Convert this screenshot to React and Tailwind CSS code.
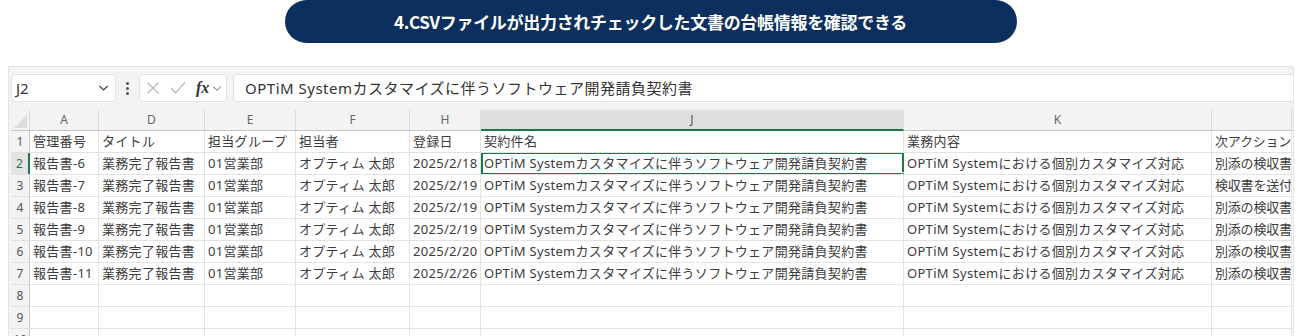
import React from "react";

const COLS = ["w-[19px]", "w-[69px]", "w-[106px]", "w-[91px]", "w-[114px]", "w-[71px]", "w-[423px]", "w-[308px]", "w-[80px]"];
const LETTERS = ["A", "D", "E", "F", "H", "J", "K", ""];

const J = "OPTiM Systemカスタマイズに伴うソフトウェア開発請負契約書";
const K = "OPTiM Systemにおける個別カスタマイズ対応";

const ROWS = [
  ["管理番号", "タイトル", "担当グループ", "担当者", "登録日", "契約件名", "業務内容", "次アクション"],
  ["報告書-6", "業務完了報告書", "01営業部", "オプティム 太郎", "2025/2/18", J, K, "別添の検収書を確認"],
  ["報告書-7", "業務完了報告書", "01営業部", "オプティム 太郎", "2025/2/19", J, K, "検収書を送付して"],
  ["報告書-8", "業務完了報告書", "01営業部", "オプティム 太郎", "2025/2/19", J, K, "別添の検収書を確認"],
  ["報告書-9", "業務完了報告書", "01営業部", "オプティム 太郎", "2025/2/19", J, K, "別添の検収書を確認"],
  ["報告書-10", "業務完了報告書", "01営業部", "オプティム 太郎", "2025/2/20", J, K, "別添の検収書を確認"],
  ["報告書-11", "業務完了報告書", "01営業部", "オプティム 太郎", "2025/2/26", J, K, "別添の検収書を確認"],
  ["", "", "", "", "", "", "", ""],
  ["", "", "", "", "", "", "", ""],
  ["", "", "", "", "", "", "", ""],
];

function Chevron({ className }) {
  return (
    <svg viewBox="0 0 12 8" className={className} fill="none" stroke="currentColor" strokeWidth="1.3">
      <path d="M1.5 1.8 L6 6.2 L10.5 1.8" />
    </svg>
  );
}

export default function App() {
  return (
    <div className="w-[1301px] h-[336px] bg-white overflow-hidden font-['Noto_Sans','Noto_Sans_CJK_JP',sans-serif]">
      <div className="flex justify-center">
        <div className="w-[732px] h-[43px] rounded-full bg-[#0c2f5e] flex items-center justify-center text-white font-bold text-[17px] tracking-[-0.3px] font-['Noto_Sans_CJK_JP',sans-serif]">
          4.CSVファイルが出力されチェックした文書の台帳情報を確認できる
        </div>
      </div>

      <div className="mt-[23px] ml-[8px] w-[1286px] bg-[#f3f3f3] border-t border-l border-r border-[#e4e4e4] pl-[2px] pt-[7px] h-[300px]">
        {/* formula bar */}
        <div className="flex items-center h-[28px]">
          <div className="w-[105px] h-[28px] bg-white rounded-[4px] border border-[#e2e2e2] flex items-center justify-between pl-[4px] pr-[6px]">
            <span className="text-[15px] text-[#333]">J2</span>
            <Chevron className="w-[11px] h-[8px] text-[#444]" />
          </div>
          <div className="w-[23px] flex flex-col items-center justify-center gap-[2px]">
            <span className="w-[3px] h-[3px] rounded-full bg-[#555]"></span>
            <span className="w-[3px] h-[3px] rounded-full bg-[#555]"></span>
            <span className="w-[3px] h-[3px] rounded-full bg-[#555]"></span>
          </div>
          <div className="w-[88px] h-[28px] bg-white rounded-[4px] border border-[#e2e2e2] flex items-center pl-[6px]">
            <svg viewBox="0 0 14 14" className="w-[14px] h-[14px] text-[#b8b8b8]" fill="none" stroke="currentColor" strokeWidth="1.2">
              <path d="M1.5 1.5 L12.5 12.5 M12.5 1.5 L1.5 12.5" />
            </svg>
            <svg viewBox="0 0 16 14" className="ml-[10px] w-[16px] h-[14px] text-[#b8b8b8]" fill="none" stroke="currentColor" strokeWidth="1.2">
              <path d="M1 7 L5.5 12 L15 1.5" />
            </svg>
            <span className="ml-[10px] text-[16px] italic font-bold text-[#333] font-['Liberation_Serif',serif] leading-none">fx</span>
            <Chevron className="ml-[3px] w-[10px] h-[7px] text-[#888]" />
          </div>
          <div className="ml-[6px] flex-1 h-[28px] bg-white rounded-l-[4px] border-t border-b border-l border-[#e2e2e2] flex items-center pl-[11px] text-[15px] tracking-[0.5px] text-[#333] whitespace-nowrap">
            {J}
          </div>
        </div>

        {/* grid */}
        <div className="mt-[8px] bg-white">
          {/* column header row */}
          <div className="flex h-[21px] bg-[#f3f3f3] border-b border-[#c6c6c6]">
            <div className={`${COLS[0]} relative border-r border-[#dadada] shrink-0`}>
              <div className="absolute right-[2px] bottom-[2px] w-0 h-0 border-l-[13px] border-l-transparent border-b-[13px] border-b-[#dcdcdc]"></div>
            </div>
            {LETTERS.map((l, i) => {
              const sel = l === "J";
              return (
                <div
                  key={i}
                  className={`${COLS[i + 1]} shrink-0 flex items-center justify-center text-[12px] border-r border-[#dadada] ${
                    sel ? "bg-[#dedede] text-[#555] border-b-2 border-b-[#1b7a44] -mb-px" : "text-[#666]"
                  }`}
                >
                  {l}
                </div>
              );
            })}
          </div>

          {ROWS.map((row, r) => {
            const sel = r === 1;
            return (
              <div key={r} className="flex h-[22px] border-b border-[#e2e2e2]">
                <div
                  className={`${COLS[0]} shrink-0 flex items-center justify-center text-[12px] ${
                    sel ? "bg-[#e4e4e4] text-[#1b7a44] border-r-2 border-[#1b7a44]" : "bg-[#f3f3f3] text-[#555] border-r border-[#c6c6c6]"
                  }`}
                >
                  {r + 1}
                </div>
                {row.map((c, i) => {
                  const active = sel && i === 5;
                  const last = i === 7;
                  return (
                    <div
                      key={i}
                      className={`${COLS[i + 1]} shrink-0 relative flex items-center pl-[3px] text-[13px] text-[#3c3c3c] whitespace-nowrap overflow-hidden ${
                        last ? "tracking-[-0.2px]" : "tracking-[0.3px]"
                      } ${active ? "" : "border-r border-[#e2e2e2]"}`}
                    >
                      {c}
                      {active && (
                        <>
                          <div className="absolute inset-x-0 -top-px -bottom-px border-2 border-[#1b7a44] pointer-events-none"></div>
                          <div className="absolute right-[-2px] bottom-[-3px] w-[5px] h-[5px] bg-[#1b7a44] border border-white"></div>
                        </>
                      )}
                    </div>
                  );
                })}
              </div>
            );
          })}
        </div>
      </div>
    </div>
  );
}
